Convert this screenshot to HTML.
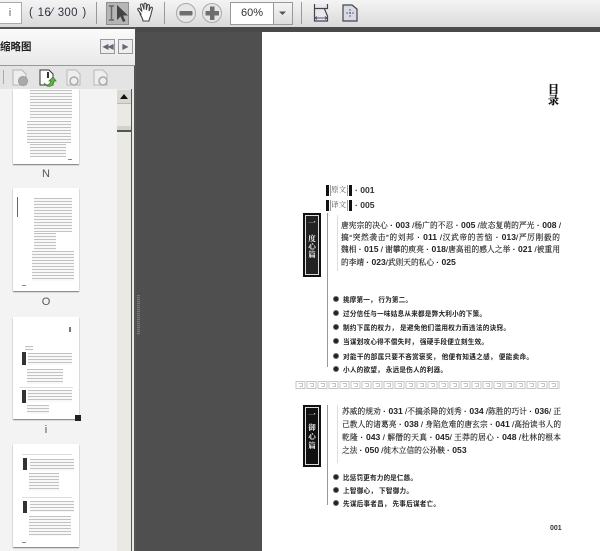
<!DOCTYPE html>
<html><head><meta charset="utf-8"><style>
html,body{margin:0;padding:0}
body{width:600px;height:551px;overflow:hidden;position:relative;background:#4f4f4f;font-family:"Liberation Sans","Noto Sans CJK SC",sans-serif}
.a{position:absolute}
.tl{position:absolute;background:repeating-linear-gradient(#c2c2c2 0 1px,#f8f8f8 1px 3px)}
.th{position:absolute;left:13px;width:66px;background:#fff;box-shadow:0 1px 1px #777}
.th>*{filter:blur(.3px)}
.lab{position:absolute;left:30px;width:32px;text-align:center;font-size:11px;color:#555}
#doc{position:absolute;left:262px;top:32px;width:338px;height:519px;background:#fff}
#txt{position:absolute;left:0;top:0;width:600px;height:551px;filter:blur(.35px);color:#222}
.p{position:absolute;font:7.7px/12px "Liberation Sans","Noto Serif CJK SC",serif;color:#222;-webkit-text-stroke:.15px #222;white-space:nowrap;text-align:justify;text-align-last:justify}
.p b{font-family:"Liberation Sans",sans-serif;font-size:8.6px;-webkit-text-stroke:0}
.bl{position:absolute;font:bold 6.6px/10px "Noto Sans CJK SC",sans-serif;color:#222;white-space:nowrap;left:343px;text-align:justify;text-align-last:justify}
.dot{position:absolute;left:332.500px;width:4px;height:4px;border-radius:50%;background:#222;border:1px solid #666}
.vt{position:absolute;left:303px;width:18px;text-align:center;color:#eee;font:bold 7.500px/8px "Noto Serif CJK SC",serif}
</style></head><body>
<!-- toolbar -->
<div class="a" style="left:0;top:0;width:600px;height:27px;background:linear-gradient(#f4f4f4,#dadada)"></div>
<div class="a" style="left:0;top:27px;width:136px;height:2px;background:#555"></div>
<div class="a" style="left:136px;top:27px;width:464px;height:5px;background:#4a4a4a"></div>
<div class="a" style="left:-2px;top:2px;width:22px;height:20px;background:#fff;border:1px solid #aaa;text-align:center;font:11px/20px 'Liberation Sans';color:#666">i</div>
<div class="a" style="left:29px;top:6px;font:11.500px/14px 'Liberation Sans';color:#334;white-space:pre;letter-spacing:.3px;word-spacing:1px">( 16⁄ 300 )</div>
<div class="a" style="left:96px;top:2px;width:1px;height:22px;background:#999"></div>
<div class="a" style="left:106px;top:2px;width:21px;height:21px;background:#b5b5b5;border:1px solid #8f8f8f"></div>
<div class="a" style="left:164px;top:2px;width:1px;height:22px;background:#999"></div>
<div class="a" style="left:301px;top:2px;width:1px;height:22px;background:#999"></div>
<div class="a" style="left:230px;top:2px;width:42px;height:21px;background:#fff;border:1px solid #999;border-right:0;text-align:center;font:11px/21px 'Liberation Sans';color:#333">60%</div>
<div class="a" style="left:273px;top:2px;width:18px;height:21px;background:linear-gradient(#f4f4f4,#ddd);border:1px solid #999"></div>
<svg class="a" style="left:0;top:0" width="600" height="90" viewBox="0 0 600 90">
 <path d="M109 6h5M109 20h5M111.500 6v14" stroke="#666" stroke-width="1.500" fill="none"/>
 <path d="M117 5v15l3.500-3.500 2.500 5.500 2.500-1-2.500-5.500h5z" fill="#444"/>
 <path d="M141 14l-3-4c-1-1.500 1-2.500 2-1l2 2.500-1.500-6c-.4-1.700 1.800-2.200 2.200-.5l1.300 4.500V4.500c0-1.700 2.300-1.700 2.300 0V10l1-4.500c.4-1.600 2.400-1.200 2.100.5L149 11l1.300-3c.7-1.500 2.600-.8 2 1l-1.800 7c-.5 2-1.500 3-1.500 5h-6c-.3-3-2-5-3-7z" fill="#fff" stroke="#444" stroke-width="1.100"/>
 <circle cx="186" cy="13" r="9.500" fill="#e6e6e6" stroke="#aaa"/>
 <rect x="179.500" y="11" width="13" height="4.500" rx="1" fill="#6e6e6e"/>
 <circle cx="212" cy="13" r="9.500" fill="#e6e6e6" stroke="#aaa"/>
 <path d="M205.500 11h4.500V6.500h4.500V11h4.500v4.500h-4.500V20h-4.500v-4.500h-4.500z" fill="#6e6e6e"/>
 <path d="M279 11.500h7l-3.500 3.500z" fill="#555"/>
 <path d="M314.500 4v4.500h13V4M314.500 9v12h13v-5l-3-7" fill="#e8e8ee" stroke="#444" stroke-width="1.200"/>
 <path d="M315 18h12M315 18l2-1.500M315 18l2 1.500M327 18l-2-1.500M327 18l-2 1.500" stroke="#557" fill="none"/>
 <path d="M343 5h9l5 4v12h-14z" fill="#d8dbe6" stroke="#444" stroke-width="1.200"/>
 <path d="M346 13h8M350 9v8" stroke="#667" stroke-dasharray="2 1" fill="none"/>
 <!-- panel toolbar icons -->
 <rect x="3" y="70" width="1" height="14" fill="#aaa"/>
 <path d="M13 70h9l4 4v11H13z" fill="#eee" stroke="#b5b5b5"/><circle cx="23" cy="81" r="4.500" fill="#aaa" stroke="#999"/>
 <path d="M40 70h9l4 4v11H40z" fill="#fff" stroke="#333"/><rect x="47" y="72" width="2" height="6" fill="#333"/>
 <path d="M44 83c3 4 6 1 7-2l-2 0 4-4 3 4h-2c0 5-6 8-10 2z" fill="#6ab04a" stroke="#3d7f2c" stroke-width=".8"/>
 <path d="M67 70h9l4 4v11H67z" fill="#eee" stroke="#b8b8b8"/><circle cx="74" cy="81" r="4" fill="none" stroke="#aaa" stroke-width="1.500"/>
 <path d="M94 70h9l4 4v11H94z" fill="#eee" stroke="#b8b8b8"/><circle cx="103" cy="81" r="4" fill="none" stroke="#aaa" stroke-width="1.500"/>
</svg>
<!-- left panel -->
<div class="a" style="left:0;top:29px;width:135px;height:36px;background:linear-gradient(#fbfbfb,#e9e9e9)"></div>
<div class="a" style="left:0;top:65px;width:135px;height:1px;background:#999"></div>
<div class="a" style="left:0;top:66px;width:135px;height:23px;background:#e4e4e4;z-index:-1"></div>
<div class="a" style="left:0;top:39px;font:bold 10.500px/16px 'Noto Sans CJK SC',sans-serif;color:#222;white-space:nowrap">缩略图</div>
<div class="a" style="left:100px;top:39px;width:13px;height:13px;border:1px solid #999;background:#eee;text-align:center;font:8px/13px 'DejaVu Sans';color:#667;letter-spacing:-1px">◀◀</div>
<div class="a" style="left:118px;top:39px;width:13px;height:13px;border:1px solid #999;background:#eee;text-align:center;font:8px/13px 'DejaVu Sans';color:#667">▶</div>
<div class="a" style="left:0;top:89px;width:117px;height:462px;background:#f3f3f3"></div>
<div class="a" style="left:117px;top:89px;width:14px;height:462px;background:#ebe9e4"></div>
<div class="a" style="left:117px;top:90px;width:14px;height:13px;background:#d9d8d2;border-bottom:1px solid #bbb"></div>
<div class="a" style="left:120px;top:94px;width:0;height:0;border:4px solid transparent;border-bottom:5px solid #111;border-top:0"></div>
<div class="a" style="left:117px;top:126px;width:14px;height:4px;background:#d2d2cc;border-bottom:2px solid #555"></div>
<div class="a" style="left:131px;top:89px;width:1px;height:462px;background:#555"></div>
<div class="a" style="left:132px;top:89px;width:2px;height:462px;background:#e8e8e8"></div>
<div class="a" style="left:134px;top:66px;width:2px;height:485px;background:#555"></div>
<div class="a" style="left:137px;top:295px;width:3px;height:40px;background:repeating-linear-gradient(#777 0 1px,#555 1px 2px)"></div>
<!-- thumbs -->
<div class="th" style="top:89px;height:75px">
 <div class="tl" style="left:17px;top:1px;width:42px;height:30px"></div>
 <div class="tl" style="left:14px;top:32px;width:44px;height:22px"></div>
 <div class="tl" style="left:17px;top:55px;width:36px;height:13px"></div>
 <div class="a" style="left:55px;top:70px;width:4px;height:1px;background:#888"></div>
</div>
<div class="lab" style="top:168px">N</div>
<div class="th" style="top:188px;height:103px">
 <div class="a" style="left:4px;top:9px;width:1px;height:20px;background:#666"></div>
 <div class="tl" style="left:21px;top:10px;width:38px;height:34px"></div>
 <div class="tl" style="left:21px;top:45px;width:22px;height:18px"></div>
 <div class="tl" style="left:19px;top:63px;width:42px;height:30px"></div>
 <div class="a" style="left:9px;top:97px;width:4px;height:1px;background:#888"></div>
</div>
<div class="lab" style="top:296px">O</div>
<div class="th" style="top:317px;height:102px">
 <div class="a" style="left:56px;top:10px;width:2px;height:5px;background:#777"></div>
 <div class="tl" style="left:12px;top:29px;width:8px;height:5px"></div>
 <div class="a" style="left:9px;top:35px;width:4px;height:13px;background:#333"></div>
 <div class="tl" style="left:15px;top:36px;width:44px;height:12px"></div>
 <div class="tl" style="left:14px;top:52px;width:36px;height:15px"></div>
 <div class="a" style="left:6px;top:70px;width:54px;height:1px;background:#ddd"></div>
 <div class="a" style="left:9px;top:73px;width:4px;height:13px;background:#333"></div>
 <div class="tl" style="left:15px;top:73px;width:44px;height:12px"></div>
 <div class="tl" style="left:14px;top:88px;width:22px;height:9px"></div>
</div>
<div class="a" style="left:75px;top:415px;width:6px;height:6px;background:#222"></div>
<div class="lab" style="top:424px">i</div>
<div class="th" style="top:444px;height:103px">
 <div class="a" style="left:9px;top:10px;width:50px;height:1px;background:#ddd"></div>
 <div class="a" style="left:10px;top:14px;width:4px;height:12px;background:#333"></div>
 <div class="tl" style="left:17px;top:15px;width:44px;height:12px"></div>
 <div class="tl" style="left:16px;top:29px;width:30px;height:18px"></div>
 <div class="a" style="left:9px;top:53px;width:50px;height:1px;background:#ddd"></div>
 <div class="a" style="left:10px;top:57px;width:4px;height:12px;background:#333"></div>
 <div class="tl" style="left:17px;top:57px;width:44px;height:11px"></div>
 <div class="tl" style="left:16px;top:72px;width:42px;height:20px"></div>
 <div class="a" style="left:9px;top:98px;width:4px;height:1px;background:#888"></div>
</div>
<!-- doc -->
<div id="doc"></div>
<div id="txt">
 <div class="a" style="left:548px;top:84px;width:11px;font:bold 11px/11px 'Noto Serif CJK SC',serif;color:#111;-webkit-text-stroke:.25px #111">目录</div>
 <svg class="a" style="left:0;top:0" width="600" height="551" viewBox="0 0 600 551">
  <defs><pattern id="o" x="295" y="381" width="11" height="8" patternUnits="userSpaceOnUse">
   <path d="M1 .500h9v7H1zM3.500 2.500h4v3h-3" fill="none" stroke="#c4c4c4"/>
  </pattern></defs>
  <path d="M326 185h3v11h-3zM326 200h3v11h-3zM349 185h3v11h-3zM349 200h3v11h-3z" fill="#111"/>
  <path d="M330.500 185v11M347.500 185v11M330.500 200v11M347.500 200v11" stroke="#999"/>
  <rect x="295" y="381" width="265" height="8" fill="url(#o)"/>
  <g fill="#111"><rect x="303" y="213" width="18" height="64"/><rect x="303" y="405" width="18" height="62"/></g>
  <rect x="305.500" y="215.500" width="13" height="59" fill="#222" stroke="#ddd"/>
  <rect x="305.500" y="407.500" width="13" height="57" fill="#111" stroke="#ddd"/>
  <path d="M327.500 213v154M327.500 405v100" stroke="#999"/>
  <path d="M337.500 215v56M337.500 405v58" stroke="#ddd"/>
 </svg>
 <div class="a" style="left:331px;top:184px;font:7.600px/12px 'Noto Serif CJK SC',serif;color:#555;white-space:nowrap">原文</div>
 <div class="a" style="left:331px;top:199px;font:7.600px/12px 'Noto Serif CJK SC',serif;color:#555;white-space:nowrap">译文</div>
 <div class="a" style="left:355px;top:184px;font:bold 8.600px/12px 'Liberation Sans';color:#333;white-space:pre">· 001</div>
 <div class="a" style="left:355px;top:199px;font:bold 8.600px/12px 'Liberation Sans';color:#333;white-space:pre">· 005</div>
 <div class="vt" style="top:219px">一</div><div class="vt" style="top:235px">度</div><div class="vt" style="top:243px">心</div><div class="vt" style="top:251px">篇</div>
 <div class="vt" style="top:411px">一</div><div class="vt" style="top:424px">御</div><div class="vt" style="top:433px">心</div><div class="vt" style="top:442px">篇</div>
 <div class="p" style="left:341px;top:219px;width:220px">唐宪宗的决心 <b>· 003</b> /杨广的不忍 <b>· 005</b> /故态复萌的严光 <b>· 008</b> /</div>
 <div class="p" style="left:341px;top:231px;width:219px">搞“突然袭击”的刘邦 <b>· 011</b> /汉武帝的苦恼 <b>· 013</b>/严厉刚毅的</div>
 <div class="p" style="left:341px;top:243px;width:219px">魏相 <b>· 015</b> / 谢攀的庾亮 <b>· 018</b>/唐高祖的感人之举 <b>· 021</b> /被重用</div>
 <div class="p" style="left:341px;top:256px;width:114px">的李靖 <b>· 023</b>/武则天的私心 <b>· 025</b></div>
 <div class="dot" style="top:296px"></div><div class="bl" style="top:294px;width:69px">挑摩第一， 行为第二。</div>
 <div class="dot" style="top:310px"></div><div class="bl" style="top:308px;width:143px">过分信任与一味姑息从来都是弊大利小的下策。</div>
 <div class="dot" style="top:324px"></div><div class="bl" style="top:322px;width:167px">制约下属的权力， 是避免他们滥用权力而违法的诀窍。</div>
 <div class="dot" style="top:338px"></div><div class="bl" style="top:336px;width:145px">当谋划攻心得不偿失时， 强硬手段便立刻生效。</div>
 <div class="dot" style="top:353px"></div><div class="bl" style="top:351px;width:190px">对能干的部属只要不吝赏褒奖， 他便有知遇之感， 便能卖命。</div>
 <div class="dot" style="top:366px"></div><div class="bl" style="top:364px;width:104px">小人的欲望， 永远是伤人的利器。</div>
 <div class="p" style="left:342px;top:405px;width:219px">苏威的规劝 <b>· 031</b> /不搞杀降的刘秀 <b>· 034</b> /陈胜的巧计 <b>· 036</b>/ 正</div>
 <div class="p" style="left:342px;top:418px;width:219px">己教人的诸葛亮 <b>· 038</b> / 身陷危难的唐玄宗 <b>· 041</b> /高抬读书人的</div>
 <div class="p" style="left:342px;top:431px;width:219px">乾隆 <b>· 043</b> / 解僭的天真 <b>· 045</b>/ 王莽的居心 <b>· 048</b> /杜林的根本</div>
 <div class="p" style="left:342px;top:444px;width:124px">之法 <b>· 050</b> /徙木立信的公孙鞅 <b>· 053</b></div>
 <div class="dot" style="top:474px"></div><div class="bl" style="top:472px;width:74px">比惩罚更有力的是仁慈。</div>
 <div class="dot" style="top:487px"></div><div class="bl" style="top:485px;width:70px">上智御心， 下智御力。</div>
 <div class="dot" style="top:500px"></div><div class="bl" style="top:498px;width:97px">先谋后事者昌， 先事后谋者亡。</div>
 <div class="a" style="left:550px;top:524px;font:bold 7px/10px 'Liberation Sans';color:#333">001</div>
</div>
</body></html>
